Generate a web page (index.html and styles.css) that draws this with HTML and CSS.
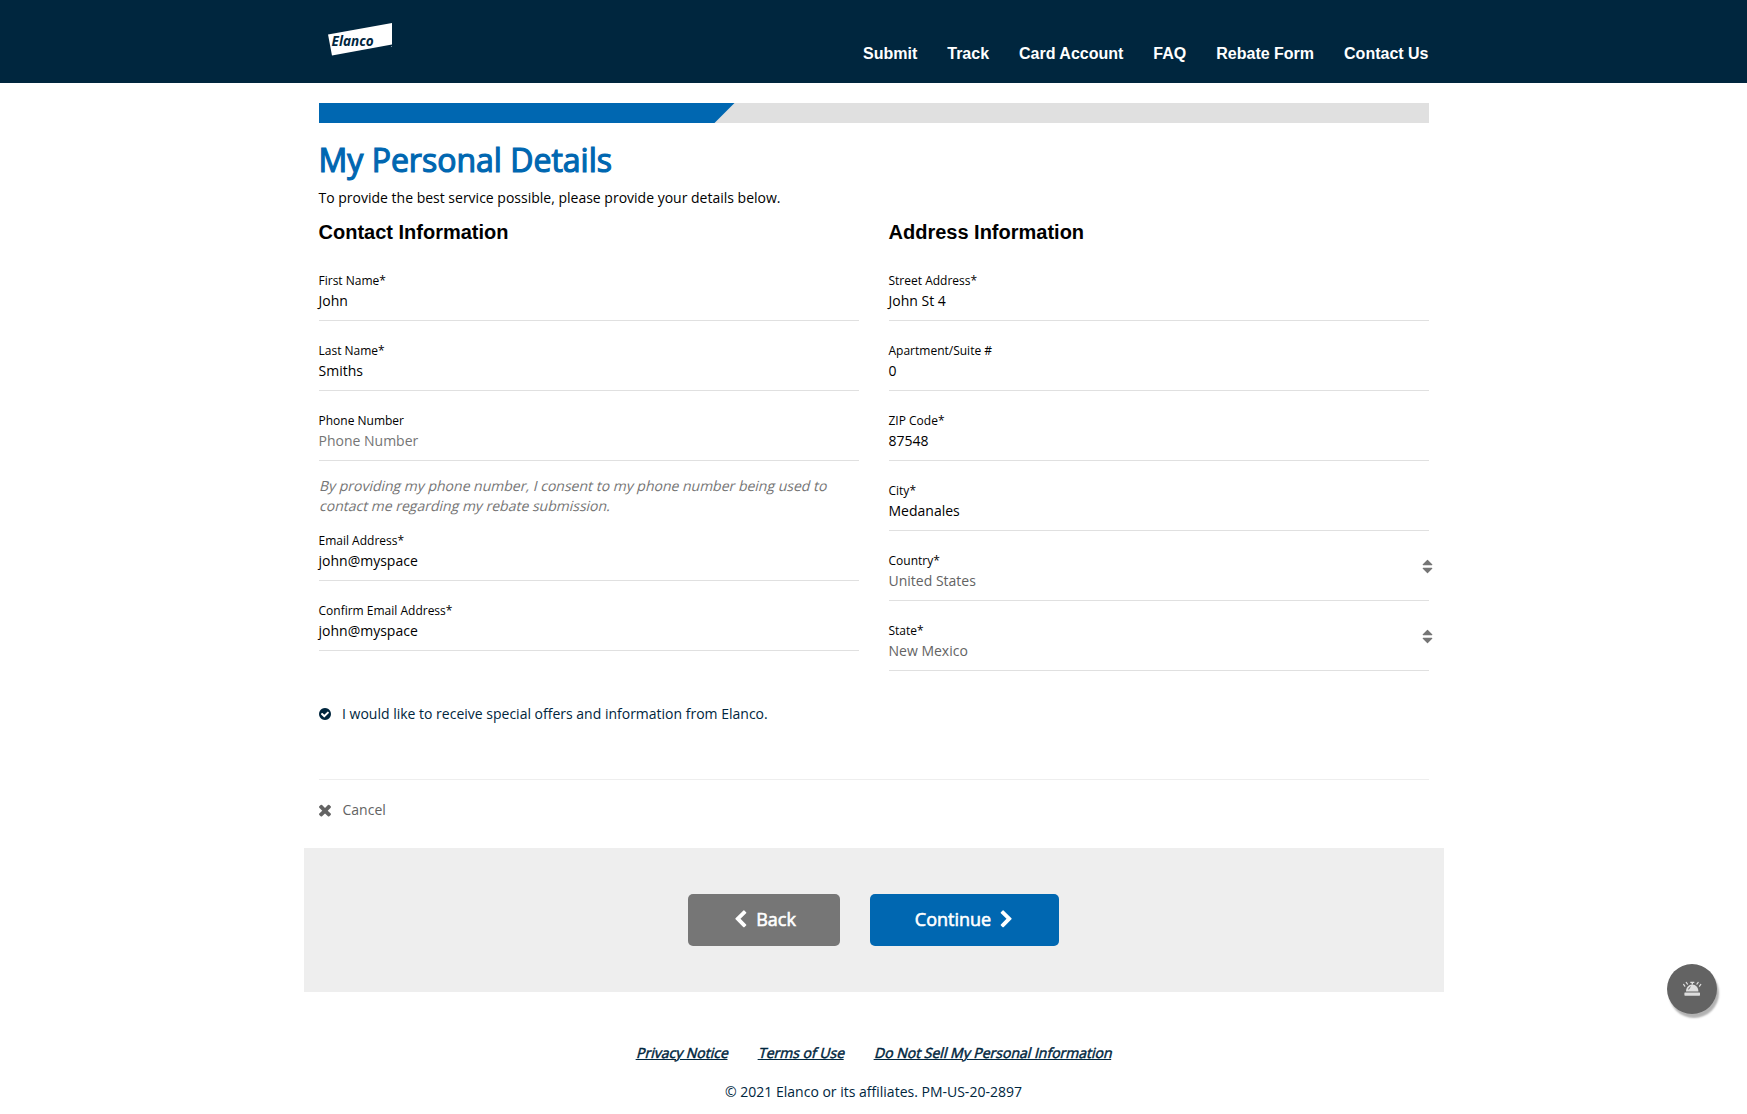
FILE: index.html
```html
<!DOCTYPE html>
<html lang="en">
<head>
<meta charset="utf-8">
<title>My Personal Details</title>
<link rel="stylesheet" href="styles.css">
</head>
<body>
<header class="site-header">
  <div class="container site-header__inner">
    <svg class="logo" width="66" height="34" viewBox="0 0 66 34" role="img" aria-label="Elanco">
      <path fill="#fff" d="M0 11.5 64 0V21.5L4 32.5Z"/>
      <text class="logo__text" x="3.6" y="23.2" textLength="42" lengthAdjust="spacingAndGlyphs">Elanco</text>
      <circle cx="63.5" cy="23.5" r=".6" fill="#8fa0ac"/>
    </svg>
    <nav class="nav">
      <a>Submit</a><a>Track</a><a>Card Account</a><a>FAQ</a><a>Rebate Form</a><a>Contact Us</a>
    </nav>
  </div>
</header>

<main class="container">
  <div class="progress"><div class="progress__bar"></div></div>
  <h1 class="title">My Personal Details</h1>
  <p class="intro">To provide the best service possible, please provide your details below.</p>

  <form class="columns">
    <section>
      <h2 class="section-title">Contact Information</h2>
      <div class="field"><label class="field__label">First Name*</label><div class="field__value">John</div></div>
      <div class="field"><label class="field__label">Last Name*</label><div class="field__value">Smiths</div></div>
      <div class="field"><label class="field__label">Phone Number</label><div class="field__value field__value--placeholder">Phone Number</div></div>
      <p class="note"><span class="note__line">By providing my phone number, I consent to my phone number being used to</span> <span class="note__line">contact me regarding my rebate submission.</span></p>
      <div class="field field--tight"><label class="field__label">Email Address*</label><div class="field__value">john@myspace</div></div>
      <div class="field"><label class="field__label">Confirm Email Address*</label><div class="field__value">john@myspace</div></div>
    </section>
    <section>
      <h2 class="section-title">Address Information</h2>
      <div class="field"><label class="field__label">Street Address*</label><div class="field__value">John St 4</div></div>
      <div class="field"><label class="field__label">Apartment/Suite #</label><div class="field__value">0</div></div>
      <div class="field"><label class="field__label">ZIP Code*</label><div class="field__value">87548</div></div>
      <div class="field"><label class="field__label">City*</label><div class="field__value">Medanales</div></div>
      <div class="field"><label class="field__label">Country*</label><div class="field__value field__value--select">United States</div>
        <svg class="field__sort" viewBox="0 0 1792 1792"><path d="M1408 1088q0 26-19 45l-448 448q-19 19-45 19t-45-19l-448-448q-19-19-19-45t19-45 45-19h896q26 0 45 19t19 45zm0-384q0 26-19 45t-45 19h-896q-26 0-45-19t-19-45 19-45l448-448q19-19 45-19t45 19l448 448q19 19 19 45z"/></svg></div>
      <div class="field"><label class="field__label">State*</label><div class="field__value field__value--select">New Mexico</div>
        <svg class="field__sort" viewBox="0 0 1792 1792"><path d="M1408 1088q0 26-19 45l-448 448q-19 19-45 19t-45-19l-448-448q-19-19-19-45t19-45 45-19h896q26 0 45 19t19 45zm0-384q0 26-19 45t-45 19h-896q-26 0-45-19t-19-45 19-45l448-448q19-19 45-19t45 19l448 448q19 19 19 45z"/></svg></div>
    </section>
  </form>

  <div class="optin">
    <svg class="optin__icon" viewBox="0 0 1792 1792"><path d="M1412 734q0-28-18-46l-91-90q-19-19-45-19t-45 19l-408 407-226-226q-19-19-45-19t-45 19l-91 90q-18 18-18 46 0 27 18 45l362 362q19 19 45 19 27 0 46-19l543-543q18-18 18-45zm252 162q0 209-103 385.5t-279.5 279.5-385.5 103-385.5-103-279.5-279.5-103-385.5 103-385.5 279.5-279.5 385.5-103 385.5 103 279.5 279.5 103 385.5z"/></svg>
    <span>I would like to receive special offers and information from Elanco.</span>
  </div>

  <div class="cancel">
    <svg class="cancel__icon" viewBox="0 0 1792 1792"><path d="M1490 1322q0 40-28 68l-136 136q-28 28-68 28t-68-28l-294-294-294 294q-28 28-68 28t-68-28l-136-136q-28-28-28-68t28-68l294-294-294-294q-28-28-28-68t28-68l136-136q28-28 68-28t68 28l294 294 294-294q28-28 68-28t68 28l136 136q28 28 28 68t-28 68l-294 294 294 294q28 28 28 68z"/></svg>
    <a>Cancel</a>
  </div>

  <div class="actions">
    <a class="btn btn--back"><svg class="btn__icon" viewBox="0 0 1792 1792"><path d="M1427 301l-531 531 531 531q19 19 19 45t-19 45l-166 166q-19 19-45 19t-45-19l-742-742q-19-19-19-45t19-45l742-742q19-19 45-19t45 19l166 166q19 19 19 45t-19 45z"/></svg><span>Back</span></a>
    <a class="btn btn--next"><span>Continue</span><svg class="btn__icon" viewBox="0 0 1792 1792"><path d="M1363 877l-742 742q-19 19-45 19t-45-19l-166-166q-19-19-19-45t19-45l531-531-531-531q-19-19-19-45t19-45l166-166q19-19 45-19t45 19l742 742q19 19 19 45t-19 45z"/></svg></a>
  </div>
</main>

<footer class="footer">
  <nav class="footer__links"><a>Privacy Notice</a><a>Terms of Use</a><a>Do Not Sell My Personal Information</a></nav>
  <p class="footer__copy">© 2021 Elanco or its affiliates. PM-US-20-2897</p>
</footer>

<button class="fab" aria-label="Service">
  <svg width="20" height="16" viewBox="0 0 20 16">
    <g fill="#dedede"><path d="M8.300 .8h4v1.200H11V3.600H9.600V2H8.300Z"/><path d="M4 10.500C4 6.400 6.600 3.400 10.200 3.400s6.200 3 6.200 7.100Z"/><rect x="2.400" y="11.400" width="15.600" height="3.300" rx=".6"/></g>
    <path d="M6.600 8.400Q7 6.600 8.600 5.800" stroke="#636363" fill="none"/>
    <path d="M1.600 3.400l1.200 1.800M4.200 1.400l1.300 1.700M18.800 3.400l-1.300 1.800M16.200 1.400l-1.300 1.700" stroke="#dedede" stroke-width="1.200" stroke-linecap="round"/>
  </svg>
</button>
</body>
</html>
```
FILE: styles.css
```css
* { box-sizing: border-box; }

body {
  margin: 0;
  background: #fff;
  color: #000;
  font: 14px/20px "Open Sans", sans-serif;
}

h1, h2, p { margin: 0; }

.container {
  width: 1140px;
  margin: 0 auto;
  padding: 0 15px;
}

.site-header {
  height: 83px;
  background: #00263e;
}

.site-header__inner {
  display: flex;
  justify-content: space-between;
  align-items: flex-start;
}

.logo { margin: 23px 0 0 9.5px; }

.logo__text {
  font: italic 700 14.5px "Open Sans", sans-serif;
  fill: #00263e;
}

.nav {
  display: flex;
  gap: 30px;
  margin-top: 44px;
  color: #fff;
  font: bold 16px/20px "Liberation Sans", Arial, sans-serif;
}

.progress {
  height: 20px;
  margin-top: 20px;
  background: #e0e0e0;
}

.progress__bar {
  width: 416px;
  height: 20px;
  background: #0067b1;
  clip-path: polygon(0 0, 100% 0, calc(100% - 20px) 100%, 0 100%);
}

.title {
  margin-top: 17px;
  color: #0067b1;
  font-size: 32px;
  font-weight: 400;
  line-height: 40px;
  -webkit-text-stroke: 1.2px #0067b1;
}

.intro { margin-top: 8px; }

.columns {
  display: grid;
  grid-template-columns: 540px 540px;
  gap: 30px;
  margin-top: 13px;
}

.section-title {
  margin-bottom: 8px;
  font: bold 20px/22px "Liberation Sans", Arial, sans-serif;
}

.field {
  position: relative;
  height: 70px;
  padding-top: 20px;
  border-bottom: 1px solid #e0e0e0;
}

.field--tight {
  height: 65px;
  padding-top: 15px;
}

.field__label {
  display: block;
  font-size: 12px;
}

.field__value--placeholder { color: #757575; }
.field__value--select { color: #636363; }

.field__sort {
  position: absolute;
  top: 27px;
  right: -7px;
  width: 17px;
  height: 17px;
  fill: #757575;
}

.note {
  margin-top: 15px;
  color: #757575;
}

/* Slanted roman rather than the narrower italic face */
.note__line {
  display: block;
  transform: skewX(-14deg);
  transform-origin: 0 15px;
}

.optin {
  display: flex;
  align-items: center;
  gap: 10.5px;
  margin-top: 33px;
  padding-bottom: 55px;
  border-bottom: 1px solid #eee;
  color: #00263e;
}

.optin__icon {
  width: 14px;
  height: 14px;
  margin-left: -1px;
  fill: #00263e;
}

.cancel {
  display: flex;
  align-items: center;
  gap: 8.5px;
  margin-top: 20px;
  color: #636363;
}

.cancel__icon {
  width: 18px;
  height: 18px;
  margin: -1px 0 0 -2.5px;
  fill: #636363;
}

.actions {
  display: flex;
  justify-content: center;
  gap: 30px;
  height: 144px;
  margin: 28px -15px 0;
  padding-top: 46px;
  background: #eee;
}

.btn {
  display: flex;
  justify-content: center;
  gap: 6px;
  height: 52px;
  padding-top: 13px;
  border-radius: 5px;
  color: #fff;
  font-size: 18px;
  line-height: 25px;
  -webkit-text-stroke: .6px #fff;
}

.btn--back { width: 152px; padding-right: 1px; background: #767676; }
.btn--next { width: 189px; padding-left: 2px; background: #0067b1; }

.btn__icon {
  width: 19px;
  height: 19px;
  margin-top: 3px;
  fill: #fff;
  stroke: none;
}

.footer {
  padding-top: 51px;
  color: #00263e;
  text-align: center;
}

.footer__links {
  display: flex;
  justify-content: center;
  gap: 30px;
  -webkit-text-stroke: .5px #00263e;
}

.footer__links a {
  text-decoration: underline;
  transform: skewX(-14deg);
  transform-origin: 0 15px;
}

.footer__copy { margin-top: 19px; }

.fab {
  position: fixed;
  top: 964px;
  left: 1667px;
  display: flex;
  align-items: center;
  justify-content: center;
  width: 50px;
  height: 50px;
  padding: 0;
  border: 0;
  border-radius: 50%;
  background: #636363;
  box-shadow: 2px 4px 2px rgba(0, 0, 0, .3);
}
```
